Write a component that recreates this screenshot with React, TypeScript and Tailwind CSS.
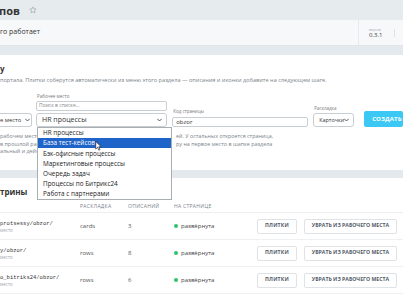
import React from 'react';

const Star: React.FC = () => (
  <svg width="8" height="8" viewBox="0 0 24 24" fill="none" stroke="#9aa3ab" strokeWidth="2" strokeLinejoin="round">
    <path d="M12 2.5l2.9 6.1 6.6.8-4.9 4.6 1.3 6.6L12 17.3l-5.9 3.3 1.3-6.6-4.9-4.6 6.6-.8z" />
  </svg>
);

const Chevron: React.FC = () => (
  <svg width="5" height="4" viewBox="0 0 10 6" fill="none" stroke="#333" strokeWidth="1.6" strokeLinecap="round" strokeLinejoin="round" className="shrink-0">
    <path d="M1 1l4 4 4-4" />
  </svg>
);

const Cursor: React.FC = () => (
  <svg width="7" height="10" viewBox="0 0 12 18">
    <path d="M1 1v13.5l3.3-3.2 2.3 5.2 2.2-1-2.3-5.1H11z" fill="#fff" stroke="#222" strokeWidth="1.2" strokeLinejoin="round" />
  </svg>
);

const workplaces = [
  'HR процессы',
  'База тест-кейсов',
  'Бэк-офисные процессы',
  'Маркетинговые процессы',
  'Очередь задач',
  'Процессы по Битрикс24',
  'Работа с партнерами',
];

const rows = [
  { path: 'protsessy/obzor/', sub: 'место', layout: 'cards', count: '3' },
  { path: 'y/obzor/', sub: 'место', layout: 'rows', count: '8' },
  { path: 'o_bitriks24/obzor/', sub: 'место', layout: 'rows', count: '6' },
];

const App: React.FC = () => {
  return (
    <div className="w-[403px] h-[294px] overflow-hidden bg-[#e6ebee] font-['Open_Sans',sans-serif] text-[#333]">
      {/* page title */}
      <div className="h-[20px] flex items-center gap-[9px]">
        <span className="text-[11px] leading-none font-bold text-[#333] -ml-px">пов</span>
        <Star />
      </div>

      {/* info card */}
      <div className="h-[26px] bg-[#f6f8f9] flex items-center border-b border-[#dfe5e8]">
        <span className="flex-1 text-[7px] text-[#333]">го работает</span>
        <div className="w-px self-stretch bg-[#e6eaec]" />
        <div className="w-[35px] pl-[10px] flex flex-col">
          <span className="text-[3.5px] leading-[5px] text-[#a8adb2]">версия</span>
          <span className="text-[6px] leading-[7px] text-[#444]">0.3.1</span>
        </div>
        <div className="w-px h-[8px] bg-[#e0e4e7] mr-[8px]" />
      </div>

      <div className="h-[9px] bg-[#e3e9ec]" />

      {/* create section */}
      <div className="h-[115px] bg-white pt-[9px] relative">
        <div className="text-[8px] leading-[10px] font-bold">у</div>
        <div className="mt-[3px] text-[5.6px] leading-[7px] text-[#7a838b] whitespace-nowrap">
          портала. Плитки соберутся автоматически из меню этого раздела — описания и иконки добавите на следующем шаге.
        </div>

        <div className="mt-[9px] flex items-end">
          <div className="w-[32px] h-[14px] border border-l-0 border-[#c9ced3] rounded-r-[3px] flex items-center gap-[4px] pr-[3px] text-[5.8px] whitespace-nowrap">
            <span>е место</span>
            <Chevron />
          </div>

          <div className="ml-[4px] w-[136px] flex flex-col relative">
            <span className="text-[4.5px] leading-[6px] text-[#777] pl-px">Рабочее место</span>
            <div className="mt-[2px] h-[10px] border border-[#c9ced3] rounded-[2px] px-[2px] flex items-center text-[5px] text-[#888]">
              Поиск в списке…
            </div>
            <div className="mt-[2px] h-[14px] border border-[#c9ced3] rounded-[3px] flex items-center justify-between pl-[5px] pr-[4px] text-[7px]">
              <span>HR процессы</span>
              <Chevron />
            </div>
            <div className="absolute top-full left-[1px] w-[135px] bg-white border border-[#a9aeb3] z-10">
              {workplaces.map((w, i) => (
                <div
                  key={w}
                  className={`h-[10.2px] flex items-center pl-[5px] text-[6.4px] ${
                    i === 1 ? 'bg-[#1f65c9] text-white' : 'text-[#222]'
                  }`}
                >
                  {w}
                </div>
              ))}
              <div className="absolute left-[57px] top-[13px]">
                <Cursor />
              </div>
            </div>
          </div>

          <div className="ml-[5px] w-[141px] flex flex-col">
            <span className="text-[4.5px] leading-[6px] text-[#777] pl-px">Код страницы</span>
            <div className="mt-[3px] h-[10px] border border-[#c9ced3] rounded-[2px] px-[3px] flex items-center text-[6px] text-[#333]">
              obzor
            </div>
          </div>

          <div className="ml-[5px] w-[41px] flex flex-col">
            <span className="text-[4.5px] leading-[6px] text-[#777] pl-px">Раскладка</span>
            <div className="mt-[2px] h-[14px] border border-[#c9ced3] rounded-[3px] flex items-center justify-between pl-[5px] pr-[4px] text-[5.4px]">
              <span>Карточки</span>
              <Chevron />
            </div>
          </div>

          <button className="ml-[10px] h-[16px] w-[40px] bg-[#3bc8f5] rounded-[2px] text-white text-[6px] font-bold tracking-wide text-left pl-[8px] whitespace-nowrap">
            СОЗДАТЬ
          </button>
        </div>

        <div className="mt-[6px] text-[5.4px] leading-[7.5px] text-[#7a838b] whitespace-nowrap">
          <div className="flex">
            <span className="w-[176px] shrink-0 overflow-hidden">рабочем месте</span>
            <span>ей. У остальных откроется страница,</span>
          </div>
          <div className="flex">
            <span className="w-[176px] shrink-0 overflow-hidden">в прошлой ра</span>
            <span>ру на первое место в шапке раздела</span>
          </div>
          <div className="flex">
            <span className="w-[176px] shrink-0 overflow-hidden">альный и дейст</span>
          </div>
        </div>
      </div>

      <div className="h-[8px] bg-[#e3e9ec]" />

      {/* list section */}
      <div className="bg-white pt-[9px] h-[200px]">
        <div className="text-[8px] leading-[10px] font-bold">трины</div>
        <div className="mt-[4px] h-[12px] flex items-center border-b border-[#eceff1] text-[5px] tracking-[0.06em] text-[#7a8189]">
          <span className="w-[80px]" />
          <span className="w-[48px]">РАСКЛАДКА</span>
          <span className="w-[46px]">ОПИСАНИЙ</span>
          <span>НА СТРАНИЦЕ</span>
        </div>
        {rows.map((r) => (
          <div key={r.path} className="h-[27px] flex items-center border-b border-[#eef0f2] text-[6px]">
            <div className="w-[80px] flex flex-col">
              <span className="font-['Liberation_Mono',monospace] text-[5.5px] leading-[7px] text-[#333]">{r.path}</span>
              <span className="text-[4.5px] leading-[6px] text-[#a0a6ac]">{r.sub}</span>
            </div>
            <span className="w-[48px] text-[#555]">{r.layout}</span>
            <span className="w-[46px] text-[#555]">{r.count}</span>
            <span className="w-[83px] flex items-center gap-[3px] text-[#444]">
              <span className="w-[4px] h-[4px] rounded-full bg-[#2fc26e]" />
              развёрнута
            </span>
            <button className="w-[40px] h-[15px] border border-[#dfe3e6] rounded-[2px] text-[5.2px] font-bold tracking-[0.04em] text-[#535c69]">
              ПЛИТКИ
            </button>
            <button className="ml-[7px] w-[93px] h-[15px] border border-[#dfe3e6] rounded-[2px] text-[5.2px] font-bold text-[#535c69] whitespace-nowrap">
              УБРАТЬ ИЗ РАБОЧЕГО МЕСТА
            </button>
          </div>
        ))}
      </div>
    </div>
  );
};

export default App;
